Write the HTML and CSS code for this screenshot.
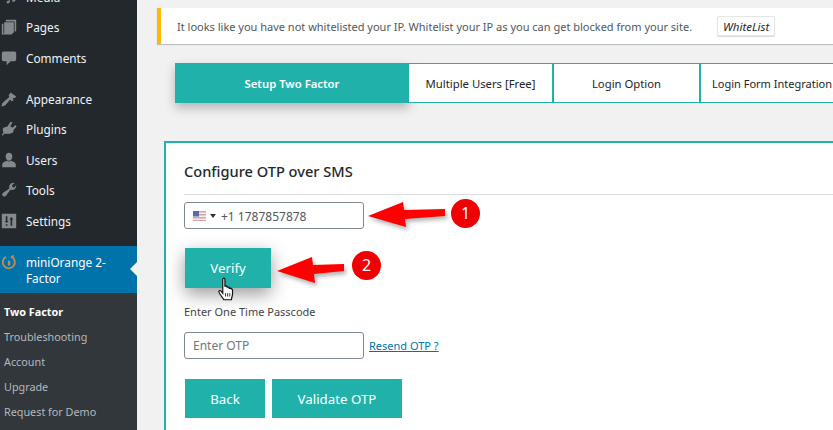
FILE: index.html
```html
<!DOCTYPE html>
<html lang="en">
<head>
  <meta charset="UTF-8" />
  <title>miniOrange 2-Factor</title>
  <link rel="stylesheet" href="styles.css">
</head>
<body>

<div class="admin">
  <nav class="sidebar">
    <ul class="menu">
      <li class="menu-item">
        <svg class="menu-icon" viewBox="0 0 20 20"><path d="M8 0h10v14c0 2-4 3-4 1s2-2.500 3-2.500V5h-6v11c0 2-4 3-4 1s2-2.500 3-2.500z"/></svg>
        <span>Media</span>
      </li>
      <li class="menu-item">
        <svg class="menu-icon" viewBox="0 0 20 20"><path d="M6 1h13v14l-2 1V3H6zM4 4h12v13l-2 1H4zM1 6h2v12h11v1.500H1z"/></svg>
        <span>Pages</span>
      </li>
      <li class="menu-item menu-item-last">
        <svg class="menu-icon" viewBox="0 0 20 20"><path d="M3 2h14c1 0 2 1 2 2v8c0 1-1 2-2 2h-5l-5 5v-5H3c-1 0-2-1-2-2V4c0-1 1-2 2-2z"/></svg>
        <span>Comments</span>
      </li>
      <li class="menu-item">
        <svg class="menu-icon" viewBox="0 0 20 20"><path d="M12 2l7 5-2 2-2-.5.5 3-2 1.500-2-2.500-5 6-2 2-4 1 1-4 3-3 6-5-1-2z"/></svg>
        <span>Appearance</span>
      </li>
      <li class="menu-item">
        <svg class="menu-icon" viewBox="0 0 20 20"><path d="M12 1l2.500 1-3 4.500 3 2 3.500-3.500 1.500 2-3.500 4-1 3.500-4 1.500H4l-2 2.500-1-1 2-3-1-4 1-2 5-1.500z"/></svg>
        <span>Plugins</span>
      </li>
      <li class="menu-item">
        <svg class="menu-icon" viewBox="0 0 20 20"><path d="M10 1c2.400 0 4.200 2 4.200 4.500S12.400 11 10 11 5.800 8 5.800 5.500 7.600 1 10 1zM1.500 15.500c0-2 4-4 6-4.500 1.500 1 3.500 1 5 0 2 .5 6 2.500 6 4.500V19h-17z"/></svg>
        <span>Users</span>
      </li>
      <li class="menu-item">
        <svg class="menu-icon" viewBox="0 0 20 20"><path d="M19 5c0 3.500-3.500 6-7 4.500L6.500 17c-1 1.800-4 1.500-4.800-.5-.4-1.200 0-2.300 1-3L10.500 8C9.500 4.500 12 1 15.500 1l1.500.3-3.200 2.900.5 2.300 2.300.5L19 3.600z"/></svg>
        <span>Tools</span>
      </li>
      <li class="menu-item">
        <svg class="menu-icon" viewBox="0 0 20 20"><path fill-rule="evenodd" d="M1 1h18v18H1zM6 4v6H4.500L7 12.500 9.500 10H8V4zm7 1-2.500 3H12v8h2V8h1.500zM6 14v2h2v-2z"/></svg>
        <span>Settings</span>
      </li>
      <li class="menu-item menu-item-current">
        <svg class="menu-icon" viewBox="0 0 20 20"><path d="M12.800 3.300a7.600 7.600 0 1 1-6.500.2" fill="none" stroke="#c98a4b" stroke-width="2.200"/><path class="logo-fill" d="M8.700 8.500h2.800v6H8.700zM12 4l3-3 1.500 1.500-3 3z"/></svg>
        <span>miniOrange 2-Factor</span>
      </li>
    </ul>
    <ul class="submenu">
      <li class="submenu-current">Two Factor</li>
      <li>Troubleshooting</li>
      <li>Account</li>
      <li>Upgrade</li>
      <li>Request for Demo</li>
    </ul>
  </nav>

  <main class="content">
    <div class="notice">
      <span>It looks like you have not whitelisted your IP. Whitelist your IP as you can get blocked from your site.</span>
      <button type="button" class="notice-btn">WhiteList</button>
    </div>

    <div class="tabs">
      <div class="tab tab-active">Setup Two Factor</div>
      <div class="tab tab-users">Multiple Users [Free]</div>
      <div class="tab tab-login">Login Option</div>
      <div class="tab tab-form">Login Form Integration</div>
    </div>

    <section class="card">
      <h2>Configure OTP over SMS</h2>
      <div class="field phone-field">
        <svg class="flag" viewBox="0 0 13 10">
          <rect width="13" height="10" fill="#d9a3a8"/>
          <rect y="1.500" width="13" height="1.500" fill="#f2f0f2"/>
          <rect y="4.500" width="13" height="1.500" fill="#f2f0f2"/>
          <rect y="7.500" width="13" height="1.500" fill="#f2f0f2"/>
          <rect width="6" height="5.500" fill="#5d6aa8"/>
        </svg>
        <span class="caret"></span>
        <span class="phone-number">+1 1787857878</span>
      </div>
      <button type="button" class="btn btn-verify">Verify</button>
      <p class="otp-label">Enter One Time Passcode</p>
      <div class="otp-row">
        <div class="field otp-field">Enter OTP</div>
        <a href="#" class="resend">Resend OTP ?</a>
      </div>
      <div class="actions">
        <button type="button" class="btn btn-back">Back</button>
        <button type="button" class="btn btn-validate">Validate OTP</button>
      </div>
    </section>
  </main>
</div>

<!-- red marks drawn on top of the screenshot -->
<svg class="marks" viewBox="0 0 833 430">
  <path d="M368 216 403 202 404 210 445 209 445 216 405 219 406 227z"/>
  <path d="M277 271 312 257 313 265 344 264 344 271 314 274 315 283z"/>
</svg>
<div class="step step-one">1</div>
<div class="step step-two">2</div>
<svg class="hand" viewBox="0 0 16 24">
  <path d="M5 2c0-1.300 2-1.300 2 0v7c0-1 2-1 2 0v1c0-1 2-1 2 0v1c0-1 2-1 2 0 0 0 1 0 1 1v4c0 2-1 3-1 5H6c-1-2-4-5-4.500-7-.3-1.500 1-2 2-1L5 15z" fill="#fff" stroke="#111" stroke-width="1.100"/>
  <path d="M7.500 15v3M9.500 15v3M11.500 15v3" stroke="#111" stroke-width=".8" fill="none"/>
</svg>

</body>
</html>
```

FILE: styles.css
```css
:root {
  --teal: #20b2aa;
  --side-dark: #23282d;
  --side-sub: #32373c;
  --wp-blue: #0073aa;
  --text-dark: #32373c;
}

* {
  box-sizing: border-box;
}

html, body {
  height: 100%;
}

body {
  margin: 0;
  overflow: hidden;
  position: relative;
  font-family: "Noto Sans", "Open Sans", sans-serif;
  font-size: 12px;
  color: var(--text-dark);
  background: #f1f1f1;
}

.admin {
  display: flex;
  height: 430px;
  overflow: hidden;
}

/* sidebar */

.sidebar {
  width: 137px;
  flex-shrink: 0;
  background: var(--side-dark);
  overflow: hidden;
}

.menu, .submenu {
  list-style: none;
  margin: 0;
  padding: 0;
}

.menu {
  margin-top: -18.5px;
}

.menu-item {
  display: flex;
  align-items: center;
  height: 30.5px;
  padding-left: 1px;
  color: #eef3f7;
  font-size: 11.8px;
}

.menu-item-last {
  margin-bottom: 10.5px;
}

.menu-icon {
  width: 16px;
  height: 16px;
  margin-right: 9px;
  flex-shrink: 0;
  fill: #84898e;
}

.logo-fill {
  fill: #c98a4b;
}

.menu-item-current {
  position: relative;
  align-items: flex-start;
  height: 47px;
  margin-top: 10px;
  padding-top: 8px;
  padding-right: 8px;
  line-height: 16px;
  color: #fff;
  background: var(--wp-blue);
}

.menu-item-current::after {
  content: "";
  position: absolute;
  right: 0;
  top: 16px;
  border: 7px solid transparent;
  border-right-color: #f1f1f1;
}

.submenu {
  height: 200px;
  padding-top: 6px;
  background: var(--side-sub);
}

.submenu li {
  height: 25px;
  line-height: 25px;
  padding-left: 4px;
  font-size: 10.8px;
  color: #b4b9be;
}

.submenu .submenu-current {
  font-weight: 700;
  color: #fff;
}

/* main column */

.content {
  flex: 1;
  min-width: 0;
  padding: 8px 0 0 20px;
}

.notice {
  display: flex;
  align-items: center;
  gap: 25px;
  height: 36px;
  margin-right: -10px;
  padding-left: 16px;
  background: #fff;
  border-left: 4px solid #ffb900;
  box-shadow: 0 1px 1px rgba(0, 0, 0, 0.2);
  font-size: 11px;
  color: #50575e;
}

.notice-btn {
  width: 58px;
  height: 20px;
  padding: 0;
  font: italic 11.5px "Noto Sans", "Open Sans", sans-serif;
  color: #23282d;
  background: #fff;
  border: 1px solid #e6e6e6;
  border-radius: 2px;
  box-shadow: 0 1px 1px rgba(0, 0, 0, 0.15);
}

.tabs {
  display: flex;
  width: 760px;
  height: 40px;
  margin: 19px 0 38px 18px;
}

.tab {
  display: flex;
  align-items: center;
  justify-content: center;
  flex-shrink: 0;
  background: #fff;
  border: 1px solid var(--teal);
  border-width: 1px 2px 1px 0;
  font-size: 11.3px;
  color: #1d2327;
}

.tab-active {
  width: 234px;
  font-weight: 600;
  color: #fff;
  background: var(--teal);
  border: none;
  box-shadow: 0 5px 10px rgba(0, 0, 0, 0.25);
}

.tab-users {
  width: 145px;
}

.tab-login {
  width: 147px;
}

.tab-form {
  width: 235px;
  justify-content: flex-start;
  padding-left: 11px;
  font-size: 11px;
}

.card {
  width: 700px;
  height: 300px;
  margin-left: 7px;
  padding: 19px 18px;
  background: #fff;
  border: 2px solid var(--teal);
}

.card h2 {
  margin: 0 0 7px;
  padding-bottom: 13px;
  border-bottom: 1px solid #ddd;
  font-size: 14.6px;
  line-height: 19px;
  font-weight: 500;
  color: #23282d;
}

.field {
  display: flex;
  align-items: center;
  width: 180px;
  height: 27px;
  padding-left: 8px;
  background: #fff;
  border: 1px solid #7e8993;
  border-radius: 3px;
  font-size: 12px;
}

.phone-field {
  color: #50575e;
}

.phone-number {
  padding-top: 1px;
}

.flag {
  width: 13px;
  height: 10px;
  margin-right: 4px;
}

.caret {
  width: 0;
  height: 0;
  margin-right: 5px;
  border: 3px solid transparent;
  border-top: 4px solid #333;
  border-bottom: 0;
}

.btn {
  display: block;
  padding: 0;
  border: none;
  font: 13.3px "Noto Sans", "Open Sans", sans-serif;
  color: #fff;
  background: var(--teal);
}

.btn-verify {
  width: 86px;
  height: 40px;
  margin: 19px 0 0 1px;
  box-shadow: 0 6px 18px rgba(0, 0, 0, 0.4);
}

.otp-label {
  margin: 16px 0 0;
  line-height: 16px;
  font-size: 11px;
  color: #444;
}

.otp-row {
  display: flex;
  align-items: center;
  gap: 5px;
  margin-top: 12px;
}

.otp-field {
  color: #72777c;
}

.resend {
  font-size: 11px;
  color: #0073aa;
}

.actions {
  display: flex;
  gap: 7px;
  margin: 20px 0 0 1px;
}

.btn-back {
  width: 80px;
  height: 39px;
}

.btn-validate {
  width: 130px;
  height: 39px;
}

/* annotations */

.marks {
  position: absolute;
  left: 0;
  top: 0;
  width: 833px;
  height: 430px;
  fill: #ff0000;
  filter: drop-shadow(2px 3px 2px rgba(0, 0, 0, 0.3));
}

.step {
  position: absolute;
  width: 29px;
  height: 29px;
  line-height: 29px;
  text-align: center;
  border-radius: 50%;
  font-size: 16px;
  color: #fff;
  background: #f00000;
}

.step-one {
  left: 451px;
  top: 199px;
}

.step-two {
  left: 352px;
  top: 251px;
}

.hand {
  position: absolute;
  left: 217px;
  top: 277px;
  width: 18px;
  height: 26px;
}
```
